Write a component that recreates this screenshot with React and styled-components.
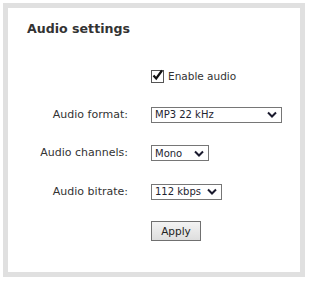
import React from "react";
import styled, { createGlobalStyle } from "styled-components";

const GlobalStyle = createGlobalStyle`
  body {
    margin: 0;
    background: #fff;
    font-family: "DejaVu Sans", Verdana, sans-serif;
  }
`;

const Chevron = () => (
  <svg width="10" height="7" viewBox="0 0 10 7">
    <path d="M1 1.5 L5 5.5 L9 1.5" fill="none" stroke="#1a1a2e" strokeWidth="2" />
  </svg>
);

const Select = ({ value, width }) => (
  <StSelect $width={width}>
    <span>{value}</span>
    <Chevron />
  </StSelect>
);

const App = () => {
  return (
    <>
      <GlobalStyle />
      <StFrame>
        <StTitle>Audio settings</StTitle>
        <StForm>
          <span />
          <StCheckLabel>
            <StCheckbox>
              <svg width="13" height="13" viewBox="0 0 13 13">
                <path d="M2.5 6.5 L5.2 9.5 L11 1.5" fill="none" stroke="#111" strokeWidth="2.2" />
              </svg>
            </StCheckbox>
            Enable audio
          </StCheckLabel>

          <StLabel>Audio format:</StLabel>
          <Select value="MP3 22 kHz" width={131} />

          <StLabel>Audio channels:</StLabel>
          <Select value="Mono" width={58} />

          <StLabel>Audio bitrate:</StLabel>
          <Select value="112 kbps" width={71} />

          <span />
          <StApply>Apply</StApply>
        </StForm>
      </StFrame>
    </>
  );
};

export default App;

const StFrame = styled.div`
  margin: 3px;
  width: 302px;
  height: 274px;
  box-sizing: border-box;
  border: 5px solid #e0e0e0;
  background: #fff;
  padding-top: 13px;
`;

const StTitle = styled.h2`
  margin: 0;
  padding-left: 19px;
  font-size: 12.6px;
  line-height: 16px;
  font-weight: 700;
  color: #333;
`;

const StForm = styled.div`
  display: grid;
  grid-template-columns: 120px auto;
  column-gap: 23px;
  grid-auto-rows: 38.5px;
  align-items: center;
  justify-items: start;
  margin-top: 20px;
`;

const StLabel = styled.label`
  justify-self: end;
  font-size: 11px;
  color: #333;
  margin-top: -1px;
`;

const StCheckLabel = styled.label`
  display: flex;
  align-items: center;
  gap: 4px;
  font-size: 10.5px;
  color: #333;
`;

const StCheckbox = styled.span`
  position: relative;
  width: 11px;
  height: 11px;
  border: 1px solid #555;
  background: #fff;

  svg {
    position: absolute;
    left: -1px;
    top: -2px;
  }
`;

const StSelect = styled.div`
  width: ${(p) => p.$width}px;
  height: 16px;
  box-sizing: border-box;
  border: 1px solid #767676;
  background: #fff;
  display: flex;
  align-items: center;
  justify-content: space-between;
  padding: 0 4px 0 3px;
  font-size: 10px;
  color: #1e2430;
`;

const StApply = styled.button`
  width: 50px;
  height: 20px;
  border: 1px solid #707070;
  border-radius: 0;
  background: linear-gradient(#f3f3f3, #dedede);
  font-family: inherit;
  font-size: 10.5px;
  color: #222;
  padding: 0;
  margin-top: 1px;
`;
